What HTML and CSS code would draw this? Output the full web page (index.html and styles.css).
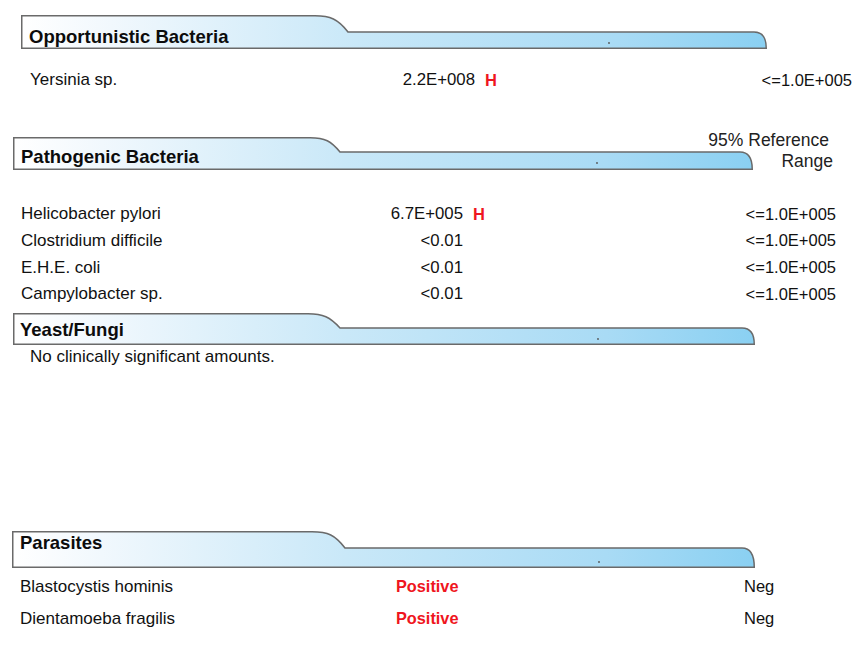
FILE: index.html
```html
<!DOCTYPE html>
<html lang="en">
<head>
<meta charset="utf-8">
<title>Microbiology results</title>
<link rel="stylesheet" href="styles.css">
</head>
<body>
<main class="page">
  <svg class="defs" width="0" height="0" aria-hidden="true">
    <defs>
      <linearGradient id="hdrGrad" x1="0" y1="0" x2="1" y2="0">
        <stop offset="0" stop-color="#ffffff"/>
        <stop offset="0.12" stop-color="#f1f8fd"/>
        <stop offset="0.45" stop-color="#c9e8f8"/>
        <stop offset="0.8" stop-color="#a9dbf5"/>
        <stop offset="1" stop-color="#8ad0f2"/>
      </linearGradient>
    </defs>
  </svg>

  <section class="sec sec-opp">
    <div class="hdr hdr-opp">
      <svg class="hdr-shape" width="746" height="34" viewBox="0 0 746 34">
        <path d="M0.75,0.75 H294 C309,0.75 317,4 327,17 H733 Q745.25,17 745.25,33.25 H0.75 Z" fill="url(#hdrGrad)" stroke="#6a6a6a" stroke-width="1.5"/>
        <circle cx="588" cy="28" r="0.9" fill="#555"/>
      </svg>
      <h2 class="hdr-title">Opportunistic Bacteria</h2>
    </div>
    <div class="rows rows-opp">
      <span class="name">Yersinia sp.</span><span class="val">2.2E+008</span><span class="flag">H</span><span class="range">&lt;=1.0E+005</span>
    </div>
  </section>

  <section class="sec sec-path">
    <div class="hdr hdr-path">
      <svg class="hdr-shape" width="740" height="33" viewBox="0 0 740 33">
        <path d="M0.75,0.75 H297 C312,0.75 318,4 327,15 H727 Q739.25,15 739.25,32.25 H0.75 Z" fill="url(#hdrGrad)" stroke="#6a6a6a" stroke-width="1.5"/>
        <circle cx="584" cy="26" r="0.9" fill="#555"/>
      </svg>
      <h2 class="hdr-title">Pathogenic Bacteria</h2>
      <p class="ref-note">95% Reference<br><span class="ref-range">Range</span></p>
    </div>
    <div class="rows rows-path">
      <span class="name">Helicobacter pylori</span><span class="val">6.7E+005</span><span class="flag">H</span><span class="range">&lt;=1.0E+005</span>
      <span class="name">Clostridium difficile</span><span class="val">&lt;0.01</span><span class="flag"></span><span class="range">&lt;=1.0E+005</span>
      <span class="name">E.H.E. coli</span><span class="val">&lt;0.01</span><span class="flag"></span><span class="range">&lt;=1.0E+005</span>
      <span class="name">Campylobacter sp.</span><span class="val">&lt;0.01</span><span class="flag"></span><span class="range">&lt;=1.0E+005</span>
    </div>
  </section>

  <section class="sec sec-yeast">
    <div class="hdr hdr-yeast">
      <svg class="hdr-shape" width="742" height="32" viewBox="0 0 742 32">
        <path d="M0.75,0.75 H295 C310,0.75 317,4 327,15 H729 Q741.25,15 741.25,31.25 H0.75 Z" fill="url(#hdrGrad)" stroke="#6a6a6a" stroke-width="1.5"/>
        <circle cx="585" cy="26" r="0.9" fill="#555"/>
      </svg>
      <h2 class="hdr-title">Yeast/Fungi</h2>
    </div>
    <p class="note">No clinically significant amounts.</p>
  </section>

  <section class="sec sec-para">
    <div class="hdr hdr-para">
      <svg class="hdr-shape" width="743" height="37" viewBox="0 0 743 37">
        <path d="M0.75,0.75 H300 C316,0.75 323,4 333,17 H730 Q742.25,17 742.25,36.25 H0.75 Z" fill="url(#hdrGrad)" stroke="#6a6a6a" stroke-width="1.5"/>
        <circle cx="587" cy="31" r="0.9" fill="#555"/>
      </svg>
      <h2 class="hdr-title">Parasites</h2>
    </div>
    <div class="rows rows-para">
      <span class="name">Blastocystis hominis</span><span class="pos">Positive</span><span class="neg">Neg</span>
      <span class="name">Dientamoeba fragilis</span><span class="pos">Positive</span><span class="neg">Neg</span>
    </div>
  </section>
</main>
</body>
</html>
```

FILE: styles.css
```css
html, body {
  margin: 0;
  padding: 0;
  background: #ffffff;
}

body {
  font-family: "Liberation Sans", Arial, Helvetica, sans-serif;
  color: #111111;
  width: 865px;
  height: 650px;
  overflow: hidden;
}

.page {
  display: flex;
  flex-direction: column;
  padding-top: 15px;
}

.defs {
  display: block;
  width: 0;
  height: 0;
  overflow: hidden;
}

.sec {
  display: flex;
  flex-direction: column;
}

/* ---------- section headers ---------- */
.hdr {
  display: grid;
  grid-template-columns: auto 1fr;
}

.hdr-shape {
  grid-area: 1 / 1;
  display: block;
  overflow: visible;
}

.hdr-title {
  grid-area: 1 / 1;
  align-self: start;
  margin: 0;
  font-size: 18.5px;
  line-height: 22px;
  font-weight: 700;
  color: #0c0c0c;
}

.hdr-opp { margin-left: 21px; }
.hdr-opp .hdr-title { padding: 11px 0 0 8px; }

.hdr-path { margin-left: 13px; width: 816px; }
.hdr-path .hdr-title { padding: 9px 0 0 8px; }

.hdr-yeast { margin-left: 13px; }
.hdr-yeast .hdr-title { padding: 6px 0 0 7px; }

.hdr-para { margin-left: 12px; }
.hdr-para .hdr-title { padding: 1px 0 0 8px; }

.ref-note {
  grid-area: 1 / 1 / 2 / 3;
  justify-self: end;
  align-self: start;
  margin: -7px 0 0 0;
  font-size: 17.5px;
  line-height: 21px;
  text-align: right;
  color: #222;
}

.ref-range {
  display: inline-block;
  margin-right: -4px;
}

/* ---------- rows ---------- */
.rows {
  display: grid;
  font-size: 17px;
  align-items: center;
}

.name { color: #111; }

.val {
  justify-self: end;
  font-size: 16.8px;
}

.flag {
  color: #ef1520;
  font-weight: 700;
  padding-left: 10px;
  font-size: 16.5px;
}

.range {
  justify-self: end;
  font-size: 16.5px;
}

.rows-opp {
  margin: 18px 0 0 30px;
  width: 822px;
  grid-template-columns: 200px 245px 40px 1fr;
  grid-auto-rows: 26px;
}

.rows-path {
  margin: 29px 0 0 21px;
  width: 815px;
  grid-template-columns: 200px 242px 40px 1fr;
  grid-auto-rows: 26.67px;
}

.sec-path { margin-top: 44px; }

.sec-yeast { margin-top: 5px; }

.note {
  margin: 2px 0 0 30px;
  font-size: 17px;
  line-height: 20px;
  color: #111;
}

.sec-para { margin-top: 164px; }

.rows-para {
  margin: 3px 0 0 20px;
  grid-template-columns: 376px 348px auto;
  grid-auto-rows: 32px;
}

.pos {
  color: #ef1520;
  font-weight: 700;
  font-size: 16.3px;
}

.neg {
  font-size: 16.5px;
}
```
